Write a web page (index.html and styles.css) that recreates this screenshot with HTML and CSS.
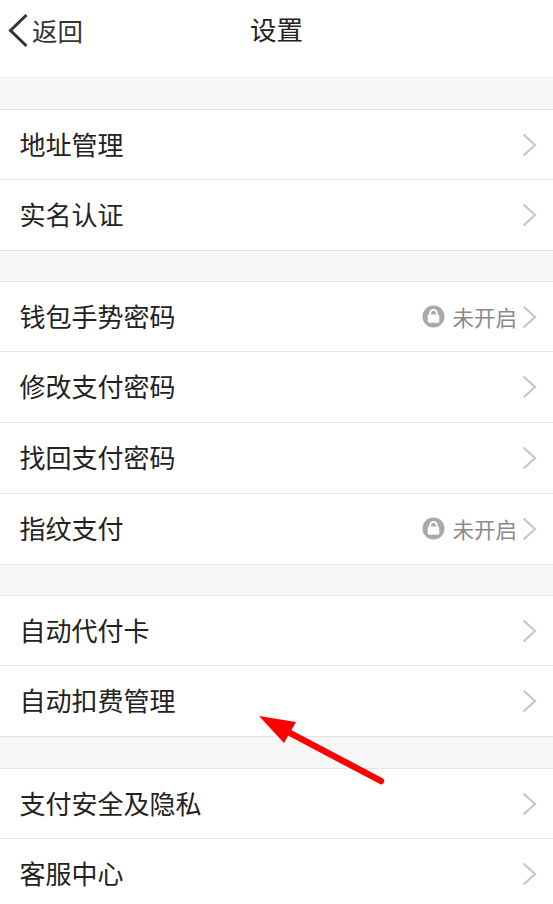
FILE: index.html
```html
<!DOCTYPE html>
<html lang="zh">
<head>
<meta charset="utf-8">
<title>设置</title>
<link rel="stylesheet" href="styles.css">
</head>
<body>
<svg width="0" height="0" class="defs">
  <symbol id="chev" viewBox="0 0 16 24"><path d="M2.5 1.5 L14 12 L2.5 22.5" fill="none" stroke="#c7c7c7" stroke-width="2.2"/></symbol>
  <symbol id="lock" viewBox="0 0 24 24"><circle cx="12" cy="12" r="11.5" fill="#a9a9a9"/><path d="M8.5 10V8.6a3.5 3.5 0 0 1 7 0V10" fill="none" stroke="#fff" stroke-width="2"/><rect x="6" y="10" width="12" height="8.5" rx="1.5" fill="#fff"/></symbol>
</svg>
<header class="nav">
  <a class="back">
    <svg class="back-icon" viewBox="0 0 20 36"><path d="M18.5 1 L2.5 16.5 L18.5 32" fill="none" stroke="#333" stroke-width="3"/></svg>
    <span>返回</span>
  </a>
  <h1>设置</h1>
</header>
<main>
  <section class="group group-wide">
    <div class="row"><span class="label">地址管理</span><svg class="chev"><use href="#chev"/></svg></div>
    <div class="row"><span class="label">实名认证</span><svg class="chev"><use href="#chev"/></svg></div>
  </section>
  <section class="group">
    <div class="row"><span class="label">钱包手势密码</span><span class="status"><svg class="lock"><use href="#lock"/></svg>未开启</span><svg class="chev"><use href="#chev"/></svg></div>
    <div class="row"><span class="label">修改支付密码</span><svg class="chev"><use href="#chev"/></svg></div>
    <div class="row"><span class="label">找回支付密码</span><svg class="chev"><use href="#chev"/></svg></div>
    <div class="row"><span class="label">指纹支付</span><span class="status"><svg class="lock"><use href="#lock"/></svg>未开启</span><svg class="chev"><use href="#chev"/></svg></div>
  </section>
  <section class="group">
    <div class="row"><span class="label">自动代付卡</span><svg class="chev"><use href="#chev"/></svg></div>
    <div class="row"><span class="label">自动扣费管理</span><svg class="chev"><use href="#chev"/></svg></div>
  </section>
  <section class="group group-wide">
    <div class="row"><span class="label">支付安全及隐私</span><svg class="chev"><use href="#chev"/></svg></div>
    <div class="row"><span class="label">客服中心</span><svg class="chev"><use href="#chev"/></svg></div>
  </section>
</main>
<svg class="arrow" viewBox="0 0 160 110"><path d="M141 91 L50 43" fill="none" stroke="#ff0000" stroke-width="6.5" stroke-linecap="round"/><path d="M19 26 L56 32 L44 53 Z" fill="#ff0000"/></svg>
</body>
</html>
```
FILE: styles.css
```css
html, body { margin: 0; padding: 0; }
body {
  width: 553px;
  height: 904px;
  overflow: hidden;
  position: relative;
  background: #f7f7f7;
  font-family: "Noto Sans CJK SC", "Liberation Sans", sans-serif;
  color: #222;
}
.defs { position: absolute; }
.nav {
  height: 77px;
  background: #fff;
  border-bottom: 1px solid #ececec;
  display: flex;
  align-items: flex-start;
  justify-content: center;
  position: relative;
}
.nav h1 {
  margin: 10px 0 0;
  font-size: 26.5px;
  line-height: 38px;
  font-weight: 400;
}
.back {
  position: absolute;
  left: 8px;
  top: 10px;
  display: flex;
  align-items: center;
  font-size: 25.5px;
  line-height: 38px;
  color: #333;
}
.back-icon { width: 20px; height: 36px; margin-right: 4px; margin-top: 4px; }
.group {
  margin-top: 30px;
  background: #fff;
  border-top: 1px solid #e4e4e4;
  border-bottom: 1px solid #e4e4e4;
}
.group-wide { margin-top: 31px; }
.row {
  box-sizing: border-box;
  height: 71px;
  display: flex;
  align-items: center;
  padding: 0 16px 0 20px;
  font-size: 26px;
  border-top: 1px solid #e8e8e8;
}
.row:first-child { border-top: 0; height: 69px; }
.label { flex: 1; margin-left: -0.5px; padding-bottom: 3px; }
.status {
  display: flex;
  align-items: center;
  font-size: 21.5px;
  color: #8a8a8a;
  margin-right: 4px;
  padding-bottom: 1px;
}
.lock { width: 23px; height: 23px; margin-right: 7px; }
.chev { width: 16px; height: 24px; }
.arrow {
  position: absolute;
  left: 240px;
  top: 690px;
  width: 160px;
  height: 110px;
}
```
